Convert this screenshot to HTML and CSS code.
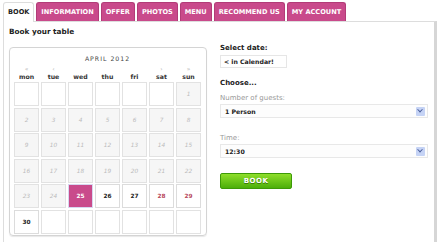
FILE: index.html
```html
<!DOCTYPE html>
<html lang="en">
<head>
  <meta charset="UTF-8" />
  <title>Book your table</title>
  <link rel="stylesheet" href="styles.css">
</head>
<body>
  <!-- tabs -->
  <ul class="tabs">
    <li class="active">BOOK</li>
    <li>INFORMATION</li>
    <li>OFFER</li>
    <li>PHOTOS</li>
    <li>MENU</li>
    <li>RECOMMEND US</li>
    <li>MY ACCOUNT</li>
  </ul>

  <div class="panel">
    <div class="left">
      <h1>Book your table</h1>
      <div class="calendar">
        <div class="month">APRIL 2012</div>
        <div class="nav">
          <span>&laquo;</span><span>&lsaquo;</span><span></span><span></span><span></span><span>&rsaquo;</span><span>&raquo;</span>
        </div>
        <div class="days">
          <span>mon</span><span>tue</span><span>wed</span><span>thu</span><span>fri</span><span>sat</span><span>sun</span>
        </div>
        <div class="grid">
          <div class="cell"></div><div class="cell"></div><div class="cell"></div><div class="cell"></div><div class="cell"></div><div class="cell"></div><div class="cell off">1</div>
          <div class="cell off">2</div><div class="cell off">3</div><div class="cell off">4</div><div class="cell off">5</div><div class="cell off">6</div><div class="cell off">7</div><div class="cell off">8</div>
          <div class="cell off">9</div><div class="cell off">10</div><div class="cell off">11</div><div class="cell off">12</div><div class="cell off">13</div><div class="cell off">14</div><div class="cell off">15</div>
          <div class="cell off">16</div><div class="cell off">17</div><div class="cell off">18</div><div class="cell off">19</div><div class="cell off">20</div><div class="cell off">21</div><div class="cell off">22</div>
          <div class="cell off">23</div><div class="cell off">24</div><div class="cell on sel">25</div><div class="cell on">26</div><div class="cell on">27</div><div class="cell on we">28</div><div class="cell on we">29</div>
          <div class="cell on">30</div><div class="cell"></div><div class="cell"></div><div class="cell"></div><div class="cell"></div><div class="cell"></div><div class="cell"></div>
        </div>
      </div>
    </div>

    <div class="right">
      <div class="label">Select date:</div>
      <div class="datebox">&lt; in Calendar!</div>
      <div class="label choose">Choose...</div>
      <div class="field">Number of guests:</div>
      <div class="select">1 Person<span class="arrow"></span></div>
      <div class="field time">Time:</div>
      <div class="select">12:30<span class="arrow"></span></div>
      <button class="book">BOOK</button>
    </div>
  </div>
</body>
</html>
```

FILE: styles.css
```css
/* base */
body {
  margin: 0;
  padding: 2px 0 0 3px;
  font-family: 'DejaVu Sans', Verdana, sans-serif;
  background: #fff;
  color: #222;
  width: 440px;
  box-sizing: border-box;
}

/* tabs */
.tabs {
  list-style: none;
  margin: 0;
  padding: 0;
  display: flex;
  gap: 2px;
  height: 19px;
  position: relative;
  z-index: 1;
}
.tabs li {
  background: #c94a8b;
  color: #fff;
  font-size: 6.6px;
  font-weight: bold;
  padding: 0 4px;
  line-height: 19px;
  border-radius: 3px 3px 0 0;
  border: 1px solid #b23c78;
  border-bottom: none;
  height: 19px;
  box-sizing: border-box;
}
.tabs li.active {
  background: #fff;
  color: #222;
  border-color: #ddd;
  height: 20px;
}

/* panel */
.panel {
  border: 1px solid #ddd;
  border-right: 3px solid #d6d6d6;
  width: 434px;
  height: 230px;
  box-sizing: border-box;
  display: flex;
}
.left {
  width: 216px;
  padding: 5px 0 0 5px;
  box-sizing: border-box;
}
h1 {
  font-size: 7.3px;
  margin: 0 0 10px 0;
  line-height: 10px;
  font-weight: bold;
}

/* calendar */
.calendar {
  width: 198px;
  height: 189px;
  border: 1px solid #d4d4d4;
  border-radius: 4px;
  box-shadow: 0 1px 1px #e8e8e8;
  box-sizing: border-box;
  padding: 6px 5px 0 4px;
}
.month {
  text-align: center;
  font-size: 6.2px;
  letter-spacing: 1px;
  color: #444;
  height: 10px;
  line-height: 10px;
}
.nav, .days {
  display: grid;
  grid-template-columns: repeat(7, 25px);
  column-gap: 2px;
  text-align: center;
}
.nav {
  font-size: 6px;
  color: #aaa;
  height: 9px;
  line-height: 9px;
}
.days {
  font-size: 6.2px;
  font-weight: bold;
  color: #333;
  height: 9px;
  line-height: 8px;
}
.grid {
  display: grid;
  grid-template-columns: repeat(7, 25px);
  grid-auto-rows: 24px;
  gap: 1.6px 2px;
}
.cell {
  border: 1px solid #e2e2e2;
  background: #fff;
  font-size: 5.8px;
  text-align: center;
  line-height: 22px;
  box-sizing: border-box;
}
.cell.off {
  background: #f6f6f6;
  color: #bbb;
  font-style: italic;
}
.cell.on {
  font-weight: bold;
  color: #222;
  border-color: #dcdcdc;
}
.cell.we {
  color: #b8485a;
}
.cell.sel {
  background: #c94a8b;
  color: #fff;
  border-color: #d7d7ef;
}

/* right column */
.right {
  padding: 21px 0 0 0;
  width: 212px;
}
.label {
  font-size: 7px;
  font-weight: bold;
  color: #222;
  height: 10px;
  line-height: 10px;
}
.datebox {
  width: 67px;
  height: 13px;
  margin-top: 2px;
  border: 1px solid #e6e6e6;
  font-size: 6.2px;
  font-weight: bold;
  line-height: 12px;
  padding-left: 3px;
  box-sizing: border-box;
}
.choose {
  margin-top: 10px;
}
.field {
  font-size: 7px;
  color: #999;
  margin-top: 5px;
  height: 10px;
  line-height: 10px;
}
.time {
  margin-top: 15px;
}
.select {
  width: 208px;
  height: 14px;
  margin-top: 1px;
  border: 1px solid #e8e8e8;
  background: #fdfdfd;
  font-size: 6.2px;
  font-weight: bold;
  line-height: 13px;
  padding-left: 4px;
  box-sizing: border-box;
  display: flex;
  justify-content: space-between;
}
.arrow {
  width: 9px;
  height: 9px;
  margin: 2px 2px 0 0;
  border-radius: 1px;
  background: #c5d3f5;
  position: relative;
}
.arrow::after {
  content: '';
  position: absolute;
  left: 2px;
  top: 2px;
  width: 3px;
  height: 3px;
  border-right: 1px solid #4a5e9a;
  border-bottom: 1px solid #4a5e9a;
  transform: rotate(45deg) translate(-1px, -1px);
}
.book {
  display: block;
  margin-top: 15px;
  width: 72px;
  height: 16px;
  border: 1px solid #3d9a07;
  border-radius: 2px;
  background: linear-gradient(#8ede2a, #4caf0a);
  color: #fff;
  font-family: 'DejaVu Sans', Verdana, sans-serif;
  font-size: 7px;
  font-weight: bold;
  letter-spacing: 0.5px;
  padding: 0;
  text-shadow: 0 1px 0 #3a7c0c;
}
```
